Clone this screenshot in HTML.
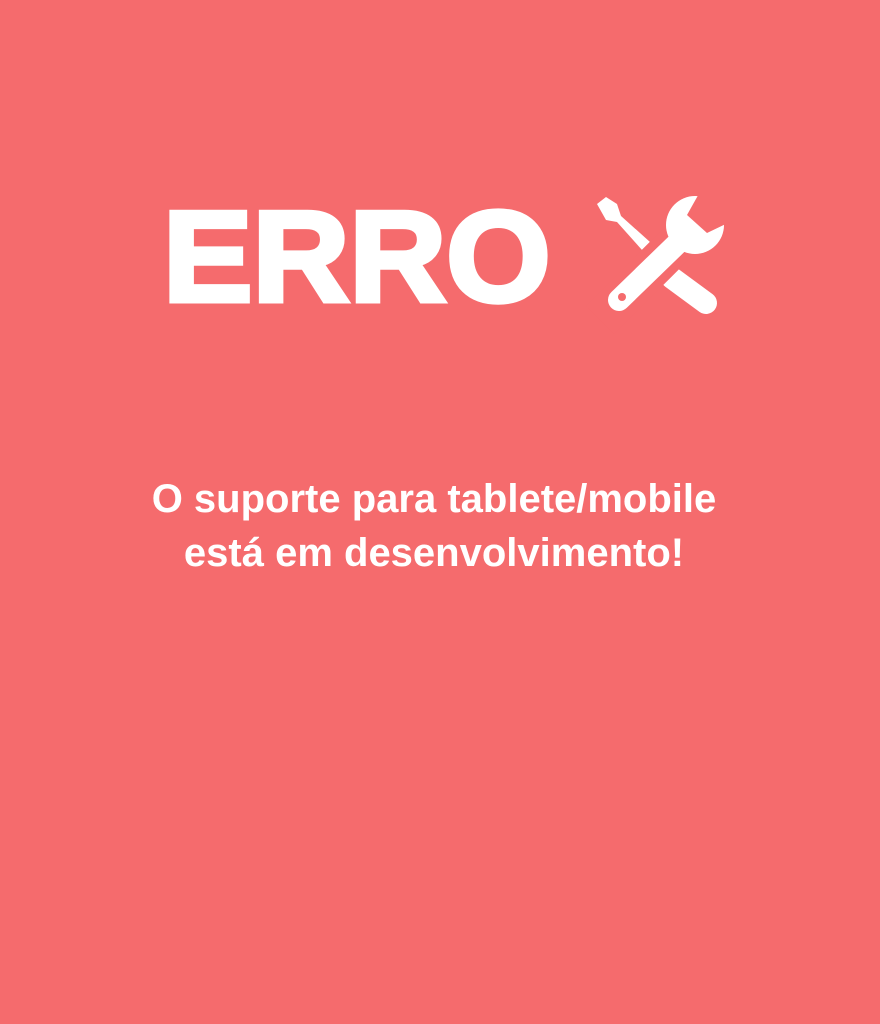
<!DOCTYPE html>
<html><head><meta charset="utf-8"><style>
html,body{margin:0;padding:0;}
body{width:880px;height:1024px;background:#f56b6d;position:relative;overflow:hidden;font-family:"Liberation Sans",sans-serif;color:#fff;}
.t{position:absolute;left:163px;top:177px;font-size:129px;font-weight:bold;line-height:160px;-webkit-text-stroke:5px #fff;white-space:nowrap;transform:scaleX(1.04);transform-origin:0 0;}
.s{position:absolute;left:0;width:868px;text-align:center;font-size:40px;font-weight:bold;white-space:nowrap;}
</style></head><body>
<div class="t">ERRO</div>
<svg style="position:absolute;left:0;top:0" width="880" height="1024">
<polygon fill="#fff" points="597,204 606,197 617,204 621,216 650,242 642,250 617,222 606,220"/>
<line x1="672" y1="278" x2="706" y2="303" stroke="#fff" stroke-width="22" stroke-linecap="round"/>
<line x1="600" y1="320" x2="700" y2="220" stroke="#f56b6d" stroke-width="40"/>
<line x1="619" y1="300" x2="685" y2="236" stroke="#fff" stroke-width="22" stroke-linecap="round"/>
<circle cx="695" cy="225" r="29" fill="#fff"/>
<polygon fill="#f56b6d" points="701,190 687,215 707,233 732,221 732,190"/>
<circle cx="622" cy="297" r="4" fill="#f56b6d"/>
</svg>
<div class="s" style="top:477px;">O suporte para tablete/mobile</div>
<div class="s" style="top:531px;">está em desenvolvimento!</div>
</body></html>
